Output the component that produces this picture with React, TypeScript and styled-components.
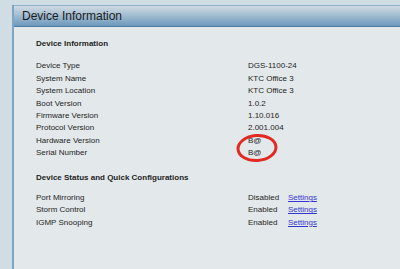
import styled, { createGlobalStyle } from 'styled-components';

const GlobalStyle = createGlobalStyle`
    html, body {
        margin: 0;
        padding: 0;
        background: #d0dde4;
        font-family: "Liberation Sans", Arial, sans-serif;
    }
`;

const Page = styled.div`
    width: 400px;
    height: 269px;
    padding: 5px 0 0 12px;
    box-sizing: border-box;
    overflow: hidden;
`;

const Panel = styled.div`
    position: relative;
    height: 100%;
    border-left: 2px solid #7ea5c4;
    background: #e3e8ea;
`;

const Header = styled.div`
    height: 20px;
    display: flex;
    align-items: center;
    padding-left: 8px;
    border-top: 1px solid #8eb0c9;
    border-bottom: 1px solid #4f7ea5;
    background: linear-gradient(to bottom, #cfdbe3 0%, #a9c1d3 40%, #6c98bd 100%);
    color: #1b1b1b;
    font-size: 12px;
`;

const Body = styled.div`
    padding: 11px 0 0 22px;
    color: #1e1e1e;
    font-size: 8px;
`;

const SectionTitle = styled.div<{ gap: number }>`
    font-weight: bold;
    line-height: 12.4px;
    margin-bottom: ${p => p.gap}px;
`;

const Rows = styled.div<{ after: number }>`
    margin-bottom: ${p => p.after}px;
`;

const Row = styled.div`
    display: grid;
    grid-template-columns: 212px 40px auto;
    line-height: 12.4px;
    white-space: nowrap;
`;

const Link = styled.a`
    color: #3535d6;
    text-decoration: underline;
`;

const Circle = styled.svg`
    position: absolute;
    left: 221px;
    top: 128px;
`;

const info = [
    ['Device Type', 'DGS-1100-24'],
    ['System Name', 'KTC Office 3'],
    ['System Location', 'KTC Office 3'],
    ['Boot Version', '1.0.2'],
    ['Firmware Version', '1.10.016'],
    ['Protocol Version', '2.001.004'],
    ['Hardware Version', 'B@'],
    ['Serial Number', 'B@'],
];

const status = [
    ['Port Mirroring', 'Disabled'],
    ['Storm Control', 'Enabled'],
    ['IGMP Snooping', 'Enabled'],
];

const App = () => {
    return (
        <Page>
            <GlobalStyle />
            <Panel>
                <Header>Device Information</Header>
                <Body>
                    <SectionTitle gap={10}>Device Information</SectionTitle>
                    <Rows after={12}>
                        {info.map(([label, value]) => (
                            <Row key={label}>
                                <span>{label}</span>
                                <span>{value}</span>
                            </Row>
                        ))}
                    </Rows>
                    <SectionTitle gap={8}>Device Status and Quick Configurations</SectionTitle>
                    <Rows after={0}>
                        {status.map(([label, value]) => (
                            <Row key={label}>
                                <span>{label}</span>
                                <span>{value}</span>
                                <Link href="#">Settings</Link>
                            </Row>
                        ))}
                    </Rows>
                </Body>
                {/* red annotation ring round the hardware/serial values */}
                <Circle width="44" height="32" viewBox="0 0 44 32">
                    <ellipse cx="22" cy="15" rx="19" ry="12.5" fill="none" stroke="#e32a22" strokeWidth="3" transform="rotate(-4 22 15)" />
                </Circle>
            </Panel>
        </Page>
    );
};

export default App;
